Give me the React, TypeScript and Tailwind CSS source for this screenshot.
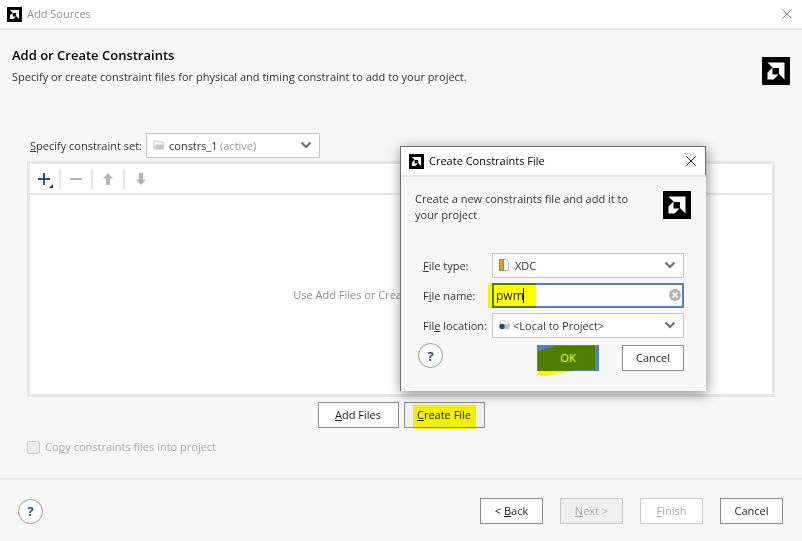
import type { ReactNode } from "react";

function Logo({ size }: { size: "sm" | "lg" }) {
  return (
    <svg viewBox="0 0 28 28" aria-hidden="true" className={size === "sm" ? "size-[15px] shrink-0" : "size-7 shrink-0"}>
      <rect width="28" height="28" fill="#000" />
      <path d="M5.500 5.500H22.500V22.500L17 17V11H11Z" fill="#fff" />
      <path d="M10.500 10.500V17.500H16.500L11.500 22.500H5.500V15.500Z" fill="#fff" />
    </svg>
  );
}

function CloseIcon({ className }: { className: string }) {
  return (
    <svg viewBox="0 0 10 10" aria-hidden="true" className={`size-[10px] ${className}`} fill="none" stroke="currentColor">
      <path d="M0.300 0.300L9.700 9.700M9.700 0.300L0.300 9.700" />
    </svg>
  );
}

function Chevron() {
  return (
    <svg viewBox="0 0 12 8" aria-hidden="true" className="pointer-events-none absolute top-2 right-2 h-2 w-3" fill="none" stroke="#6e6e6e" strokeWidth="2">
      <path d="M1.500 1.500L6 6L10.500 1.500" />
    </svg>
  );
}

function FolderIcon() {
  return (
    <svg viewBox="0 0 12 10" aria-hidden="true" className="pointer-events-none absolute top-[7px] left-[7px] h-[10px] w-3">
      <path d="M1 9V1H5L6 2H10V4" fill="none" stroke="#c6c6c6" />
      <path d="M1 9.500L3 4.500H11.500L10.500 9.500Z" fill="#c6c6c6" />
    </svg>
  );
}

function XdcIcon() {
  return (
    <svg viewBox="0 0 10 12" aria-hidden="true" className="pointer-events-none absolute top-[6px] left-[7px] h-3 w-[10px]">
      <path d="M4.500 0.500H7L9.500 3V11.500H4.500Z" fill="#fff" stroke="#b5b5b5" />
      <rect x="0.500" y="0.500" width="4" height="11" fill="#e39a35" stroke="#a8824b" />
    </svg>
  );
}

function LocalIcon() {
  return (
    <svg viewBox="0 0 11 10" aria-hidden="true" className="pointer-events-none absolute top-[7px] left-[7px] h-[10px] w-[11px]">
      <path d="M1.500 4V1H6L7 2H9.500V4" fill="none" stroke="#c6c6c6" />
      <path d="M4 4H11L10 9H4Z" fill="#c0c0c0" />
      <circle cx="3" cy="6.500" r="2.700" fill="#27407a" />
    </svg>
  );
}

function HelpButton() {
  return (
    <button type="button" aria-label="Help" className="flex size-[25px] items-center justify-center rounded-full border border-[#969696] bg-white text-[13px] font-bold text-[#2f4a8a]">
      ?
    </button>
  );
}

const buttonBase = "h-[26px] border text-[11px] leading-4";
const buttonOn = "border-[#8c8c8c] bg-white text-[#222]";

function Button({ children, className }: { children: ReactNode; className: string }) {
  return (
    <button type="button" className={`${buttonBase} ${buttonOn} ${className}`}>
      {children}
    </button>
  );
}

const comboBase = "block h-[25px] w-full appearance-none border border-[#c4c4c4] bg-white pr-6 text-[11px] text-[#333]";

function CreateFileDialog() {
  return (
    <section
      role="dialog"
      aria-labelledby="dialog-title"
      className="absolute top-[146px] left-[400px] w-[306px] border-t border-l border-[#6c6c6c] bg-[#f7f7f7] pb-5 shadow-[1px_3px_12px_rgba(0,0,0,0.45)]"
    >
      <header className="flex h-7 items-center border-r border-[#6c6c6c] bg-white pr-[9px] pl-2">
        <Logo size="sm" />
        <h2 id="dialog-title" className="ml-[5px] flex-1 text-[11px] text-black">Create Constraints File</h2>
        <button type="button" aria-label="Close dialog"><CloseIcon className="text-[#222]" /></button>
      </header>
      <div className="flex items-start justify-between border-t-2 border-[#e6e6e6] pt-[14px] pr-[15px] pl-[14px]">
        <p className="w-[230px] text-[11px] leading-4">Create a new constraints file and add it to your project</p>
        <Logo size="lg" />
      </div>
      <form className="mt-[30px] pr-[22px] pl-[22px]" onSubmit={(e) => e.preventDefault()}>
        <div className="grid grid-cols-[69px_1fr] items-center gap-y-[5px] text-[11px]">
          <label htmlFor="type"><u>F</u>ile type:</label>
          <div className="relative">
            <select id="type" className={`${comboBase} pl-[22px]`}><option>XDC</option></select>
            <XdcIcon />
            <Chevron />
          </div>
          <label htmlFor="name">F<u>i</u>le name:</label>
          <div className="relative">
            <input id="name" type="text" defaultValue="pwm" className="block h-[25px] w-full border-2 border-[#4f7fd3] bg-white pl-[2px] text-[12px] text-[#222] outline-none" />
            <span className="absolute top-[5px] left-[31px] h-[15px] w-px bg-black" />
            <svg viewBox="0 0 12 12" aria-hidden="true" className="absolute top-[6px] right-[3px] size-3">
              <circle cx="6" cy="6" r="6" fill="#b4b4b4" />
              <path d="M3.500 3.500L8.500 8.500M8.500 3.500L3.500 8.500" stroke="#fff" strokeWidth="1.500" />
            </svg>
            <span className="pointer-events-none absolute top-0 -left-1 h-[25px] w-12 bg-[#ffff00] mix-blend-multiply" />
          </div>
          <label htmlFor="location" className="whitespace-nowrap">Fil<u>e</u> location:</label>
          <div className="relative">
            <select id="location" className={`${comboBase} pl-5`}><option>&lt;Local to Project&gt;</option></select>
            <LocalIcon />
            <Chevron />
          </div>
        </div>
        <div className="-ml-[5px] flex items-start pt-[5px]">
          <HelpButton />
          <div className="relative mt-[2px] ml-auto">
            <button type="submit" className="block h-[26px] w-[62px] bg-[#4f7fd3] text-[11px] text-white">OK</button>
            <svg viewBox="0 0 62 32" aria-hidden="true" className="pointer-events-none absolute top-0 left-0 h-8 w-[62px] mix-blend-multiply">
              <path d="M1 6L8 4L18 1H58V25H36V26L28 27L18 29L10 31H1Z" fill="#ffff00" />
            </svg>
          </div>
          <Button className="mt-[2px] ml-[23px] w-[62px]">Cancel</Button>
        </div>
      </form>
    </section>
  );
}

export default function App() {
  return (
    <main className="relative flex min-h-screen flex-col overflow-hidden bg-[#f7f7f7] font-['Open_Sans','Noto_Sans',sans-serif] text-[11px] leading-4 text-[#333]">
      <header className="flex h-[30px] items-center border-b-2 border-[#e6e6e6] bg-white pr-[10px] pl-[7px]">
        <Logo size="sm" />
        <span className="ml-[5px] flex-1 text-[#909090]">Add Sources</span>
        <button type="button" aria-label="Close"><CloseIcon className="text-[#888]" /></button>
      </header>

      <div className="flex justify-between pt-[17px] pr-3 pl-3">
        <div>
          <h1 className="text-[13px] leading-4 font-semibold text-black">Add or Create Constraints</h1>
          <p className="mt-[6px]">Specify or create constraint files for physical and timing constraint to add to your project.</p>
        </div>
        <div className="mt-[10px]"><Logo size="lg" /></div>
      </div>

      <div className="mt-12 flex items-center pl-[30px]">
        <label htmlFor="set" className="w-[116px] whitespace-nowrap"><u>S</u>pecify constraint set:</label>
        <div className="relative w-[174px]">
          <select id="set" className={`${comboBase} pl-[22px]`}><option>constrs_1</option></select>
          <span className="pointer-events-none absolute top-[5px] left-[74px] text-[#999]">(active)</span>
          <FolderIcon />
          <Chevron />
        </div>
      </div>

      <section className="mx-[27px] mt-[3px] flex flex-1 flex-col border-3 border-[#e6e6e6] bg-white">
        <div className="flex h-[31px] items-center border-b-2 border-[#e6e6e6] text-[#b4b4b4]">
          <button type="button" aria-label="Add" className="flex h-5 w-[31px] items-center justify-center border-r-2 border-[#e6e6e6]">
            <svg viewBox="0 0 18 18" className="size-[18px]">
              <path d="M8 3V15M2 9H14" stroke="#2f4f8c" strokeWidth="2" />
              <path d="M17 14V18H13Z" fill="#333" />
            </svg>
          </button>
          <button type="button" aria-label="Remove" disabled className="flex h-5 w-8 items-center justify-center border-r-2 border-[#e6e6e6]">
            <svg viewBox="0 0 12 12" className="size-3"><path d="M0 6H12" stroke="currentColor" strokeWidth="2" /></svg>
          </button>
          <button type="button" aria-label="Move up" disabled className="flex h-5 w-8 items-center justify-center border-r-2 border-[#e6e6e6]">
            <svg viewBox="0 0 10 12" className="h-3 w-[10px]"><path d="M5 0L10 5.500H7V12H3V5.500H0Z" fill="currentColor" /></svg>
          </button>
          <button type="button" aria-label="Move down" disabled className="flex h-5 w-8 items-center justify-center">
            <svg viewBox="0 0 10 12" className="h-3 w-[10px]"><path d="M5 12L0 6.500H3V0H7V6.500H10Z" fill="currentColor" /></svg>
          </button>
        </div>
        <div className="flex flex-1 items-center justify-center text-[#8c8c8c]">Use Add Files or Create File buttons below</div>
      </section>

      <div className="mt-[5px] flex justify-center gap-[5px]">
        <Button className="w-[81px]"><u>A</u>dd Files</Button>
        <div className="relative">
          <button type="button" className="block h-[26px] w-[81px] border border-[#8c8c8c] bg-[#f0f0f0] text-[#222]"><u>C</u>reate File</button>
          <span className="pointer-events-none absolute top-[3px] left-[9px] h-6 w-[63px] bg-[#ffff00] mix-blend-multiply" />
        </div>
      </div>

      <label className="mt-[11px] ml-[27px] flex items-center text-[#a8a8a8]">
        <input type="checkbox" disabled className="mr-[5px] size-[13px] appearance-none rounded-[2px] border border-[#c8c8c8] bg-[#ececec]" />
        <span>Co<u>p</u>y constraints files into project</span>
      </label>

      <footer className="mt-[23px] flex items-center gap-[17px] border-t-2 border-[#e9e9e9] pt-[18px] pr-[19px] pb-[17px] pl-[18px]">
        <div className="mr-auto"><HelpButton /></div>
        <Button className="w-[63px]">&lt; <u>B</u>ack</Button>
        <button type="button" disabled className={`${buttonBase} w-[63px] border-[#c8c8c8] bg-[#efefef] text-[#a8a8a8]`}><u>N</u>ext &gt;</button>
        <button type="button" disabled className={`${buttonBase} w-[63px] border-[#c8c8c8] bg-white text-[#a8a8a8]`}><u>F</u>inish</button>
        <Button className="w-[63px]">Cancel</Button>
      </footer>

      <CreateFileDialog />
    </main>
  );
}
